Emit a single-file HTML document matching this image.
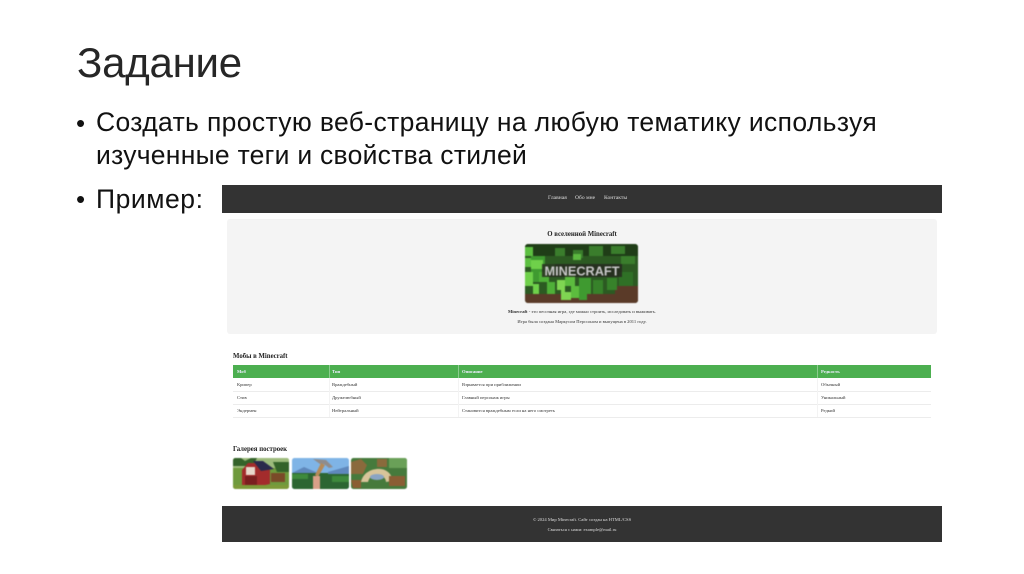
<!DOCTYPE html>
<html><head><meta charset="utf-8">
<style>
html,body{margin:0;padding:0;background:#fff;width:1024px;height:574px;overflow:hidden}
.a{position:absolute;white-space:nowrap;line-height:1}
.s{font-family:"Liberation Sans",sans-serif;color:#222;filter:blur(.25px)}
.t{font-family:"Liberation Serif",serif;font-size:4.6px;color:#333;filter:blur(.35px)}
.b{position:absolute}
.c{text-align:center}
.h{font-size:6.8px;font-weight:bold;color:#222}
.n{font-size:5.6px;color:#ddd;top:196px}
.w{color:#eef;font-weight:bold;top:369.5px}
</style></head><body>
<div class="a s" style="left:77px;top:42px;font-size:42px;letter-spacing:-.25px;color:#262626">Задание</div>
<div class="a s" style="left:76px;top:110px;font-size:26px;color:#111">•</div>
<div class="a s" style="left:96px;top:109px;font-size:26.5px;letter-spacing:.36px;color:#111">Создать простую веб-страницу на любую тематику используя</div>
<div class="a s" style="left:96px;top:142px;font-size:26.5px;letter-spacing:.27px;color:#111">изученные теги и свойства стилей</div>
<div class="a s" style="left:76px;top:186px;font-size:26px;color:#111">•</div>
<div class="a s" style="left:96px;top:186px;font-size:26.5px;letter-spacing:.55px;color:#111">Пример:</div>

<div class="b" style="left:222px;top:185px;width:720px;height:28px;background:#333"></div>
<div class="a t n" style="left:548px">Главная</div>
<div class="a t n" style="left:575px">Обо мне</div>
<div class="a t n" style="left:604px">Контакты</div>

<div class="b" style="left:227px;top:219px;width:710px;height:115px;background:#f4f4f4;border-radius:3px"></div>
<div class="a t c h" style="left:227px;width:710px;top:231.5px">О вселенной Minecraft</div>

<svg class="b" style="left:525px;top:244px;filter:blur(.6px)" width="113" height="59" viewBox="0 0 113 59">
<defs><clipPath id="r"><rect width="113" height="59" rx="3"/></clipPath></defs>
<g clip-path="url(#r)">
<rect width="113" height="59" fill="#2c5a22"/>
<rect width="113" height="12" fill="#1f3d17"/>
<rect x="0" y="50" width="113" height="9" fill="#5a3a28"/>
<path d="M90 42h23v17H90z" fill="#5a3a28"/>
<path d="M0 3h8v9H0zM0 14h6v9H0z" fill="#5cc040"/>
<path d="M6 12h14v8h10v8H20v10H6z" fill="#3f9a30"/>
<path d="M6 16h12v9H6zM0 28h8v12h6v10H8v-8H0z" fill="#6fd04a"/>
<path d="M14 28h10v10h6v12h-8V38h-8z" fill="#4fb038"/>
<path d="M32 36h8v12h6v8h-10V46h-4z" fill="#7fd552"/>
<path d="M40 30h10v12h4v12h-8V42h-6z" fill="#5cbc3e"/>
<path d="M54 34h12v16h-4v6h-8z" fill="#3f9a30"/>
<path d="M68 36h10v14H68zM82 34h10v12H82z" fill="#37822a"/>
<path d="M94 28h14v14H94z" fill="#2f7026"/>
<path d="M30 4h10v8H30zM48 6h10v8H48zM64 2h14v10H64zM86 2h14v8H86zM96 12h14v8H96z" fill="#3a7d2c"/>
<path d="M48 10h8v6h-8z" fill="#5cb840"/>
<rect x="17" y="20" width="80" height="13" fill="#26261f" opacity=".8"/>
<text x="57" y="31.5" text-anchor="middle" font-family="Liberation Sans,sans-serif" font-weight="bold" font-size="12.5" textLength="75" lengthAdjust="spacingAndGlyphs" fill="#c8c8c8">MINECRAFT</text>
</g></svg>

<div class="a t c" style="left:227px;width:710px;top:310px"><b>Minecraft</b> - это песочная игра, где можно строить, исследовать и выживать.</div>
<div class="a t c" style="left:227px;width:710px;top:320px">Игра была создана Маркусом Перссоном и выпущена в 2011 году.</div>

<div class="a t h" style="left:233px;top:354px">Мобы в Minecraft</div>

<div class="b" style="left:233px;top:365px;width:698px;height:13px;background:#4caf50"></div>
<div class="b" style="left:233px;top:390.5px;width:698px;height:1px;background:#ececec"></div>
<div class="b" style="left:233px;top:403.5px;width:698px;height:1px;background:#ececec"></div>
<div class="b" style="left:233px;top:416.5px;width:698px;height:1px;background:#ececec"></div>
<div class="b" style="left:329px;top:365px;width:1px;height:13px;background:#8bcb8e"></div>
<div class="b" style="left:458px;top:365px;width:1px;height:13px;background:#8bcb8e"></div>
<div class="b" style="left:817px;top:365px;width:1px;height:13px;background:#8bcb8e"></div>
<div class="b" style="left:329px;top:378px;width:1px;height:39px;background:#f3f3f3"></div>
<div class="b" style="left:458px;top:378px;width:1px;height:39px;background:#f3f3f3"></div>
<div class="b" style="left:817px;top:378px;width:1px;height:39px;background:#f3f3f3"></div>

<div class="a t w" style="left:237px">Моб</div>
<div class="a t w" style="left:332px">Тип</div>
<div class="a t w" style="left:462px">Описание</div>
<div class="a t w" style="left:821px">Редкость</div>

<div class="a t" style="left:237px;top:383px">Крипер</div>
<div class="a t" style="left:332px;top:383px">Враждебный</div>
<div class="a t" style="left:462px;top:383px">Взрывается при приближении</div>
<div class="a t" style="left:821px;top:383px">Обычный</div>
<div class="a t" style="left:237px;top:396px">Стив</div>
<div class="a t" style="left:332px;top:396px">Дружелюбный</div>
<div class="a t" style="left:462px;top:396px">Главный персонаж игры</div>
<div class="a t" style="left:821px;top:396px">Уникальный</div>
<div class="a t" style="left:237px;top:409px">Эндермен</div>
<div class="a t" style="left:332px;top:409px">Нейтральный</div>
<div class="a t" style="left:462px;top:409px">Становится враждебным если на него смотреть</div>
<div class="a t" style="left:821px;top:409px">Редкий</div>

<div class="a t h" style="left:233px;top:447px">Галерея построек</div>

<svg class="b" style="left:233px;top:458px;filter:blur(.5px)" width="56" height="31" viewBox="0 0 56 31">
<defs><clipPath id="g"><rect width="56" height="31" rx="2.5"/></clipPath></defs>
<g clip-path="url(#g)">
<rect width="56" height="31" fill="#6f9a3c"/>
<rect width="56" height="10" fill="#9dbb7c"/>
<path d="M0 0h8l4 3 6-3h6l-4 8H0zM40 4h16v10H44z" fill="#34632a"/>
<path d="M9 12l6-7h8l14 7v14l-14 3H9z" fill="#a32c2c"/>
<path d="M20 3h10l11 8-13 2z" fill="#2a2a4c"/>
<rect x="13" y="9" width="9" height="8" fill="#e8d8cc"/>
<rect x="12" y="18" width="12" height="9" fill="#7a1f1f"/>
<path d="M38 15h14v9H38z" fill="#7a4a28"/>
<rect y="27" width="56" height="4" fill="#7c9a38"/>
</g></svg>
<svg class="b" style="left:292px;top:458px;filter:blur(.5px)" width="57" height="31" viewBox="0 0 57 31">
<defs><clipPath id="h"><rect width="57" height="31" rx="2.5"/></clipPath></defs>
<g clip-path="url(#h)">
<rect width="57" height="31" fill="#7fb4e6"/>
<rect y="15" width="57" height="16" fill="#2c6632"/>
<path d="M0 15l12-6 14 6zM36 14l21-6v8H36z" fill="#5f88bc"/>
<path d="M0 16h16v5H0zM40 18h17v6H40z" fill="#3e8a3c"/>
<path d="M21 1l13 1 7 7-4 1-5-4-4 0z" fill="#8f8c8c"/>
<path d="M29 5l4 2-7 12-3-2z" fill="#b58a58"/>
<path d="M21 18h7v13h-7z" fill="#d8a088"/>
</g></svg>
<svg class="b" style="left:351px;top:458px;filter:blur(.5px)" width="56" height="31" viewBox="0 0 56 31">
<defs><clipPath id="k"><rect width="56" height="31" rx="2.5"/></clipPath></defs>
<g clip-path="url(#k)">
<rect width="56" height="31" fill="#467a3c"/>
<rect x="38" y="0" width="18" height="10" fill="#6aa058"/>
<path d="M0 4l10-3 6 6-4 9H0zM26 1h10v8H26z" fill="#8a6a3c"/>
<path d="M10 24c2-10 12-14 20-13s12 8 11 12l-6 1c0-5-6-8-11-7s-6 4-7 7z" fill="#d8c49a"/>
<ellipse cx="26" cy="19" rx="7" ry="3" fill="#8aa4c4"/>
<path d="M0 22h10v8H2zM38 18h16v10H38z" fill="#8a5e34"/>
</g></svg>

<div class="b" style="left:222px;top:506px;width:720px;height:36px;background:#333"></div>
<div class="a t c" style="left:222px;width:720px;top:518px;color:#ddd">© 2024 Мир Minecraft. Сайт создан на HTML/CSS</div>
<div class="a t c" style="left:222px;width:720px;top:528px;color:#ddd">Связаться с нами: example@mail.ru</div>
</body></html>
